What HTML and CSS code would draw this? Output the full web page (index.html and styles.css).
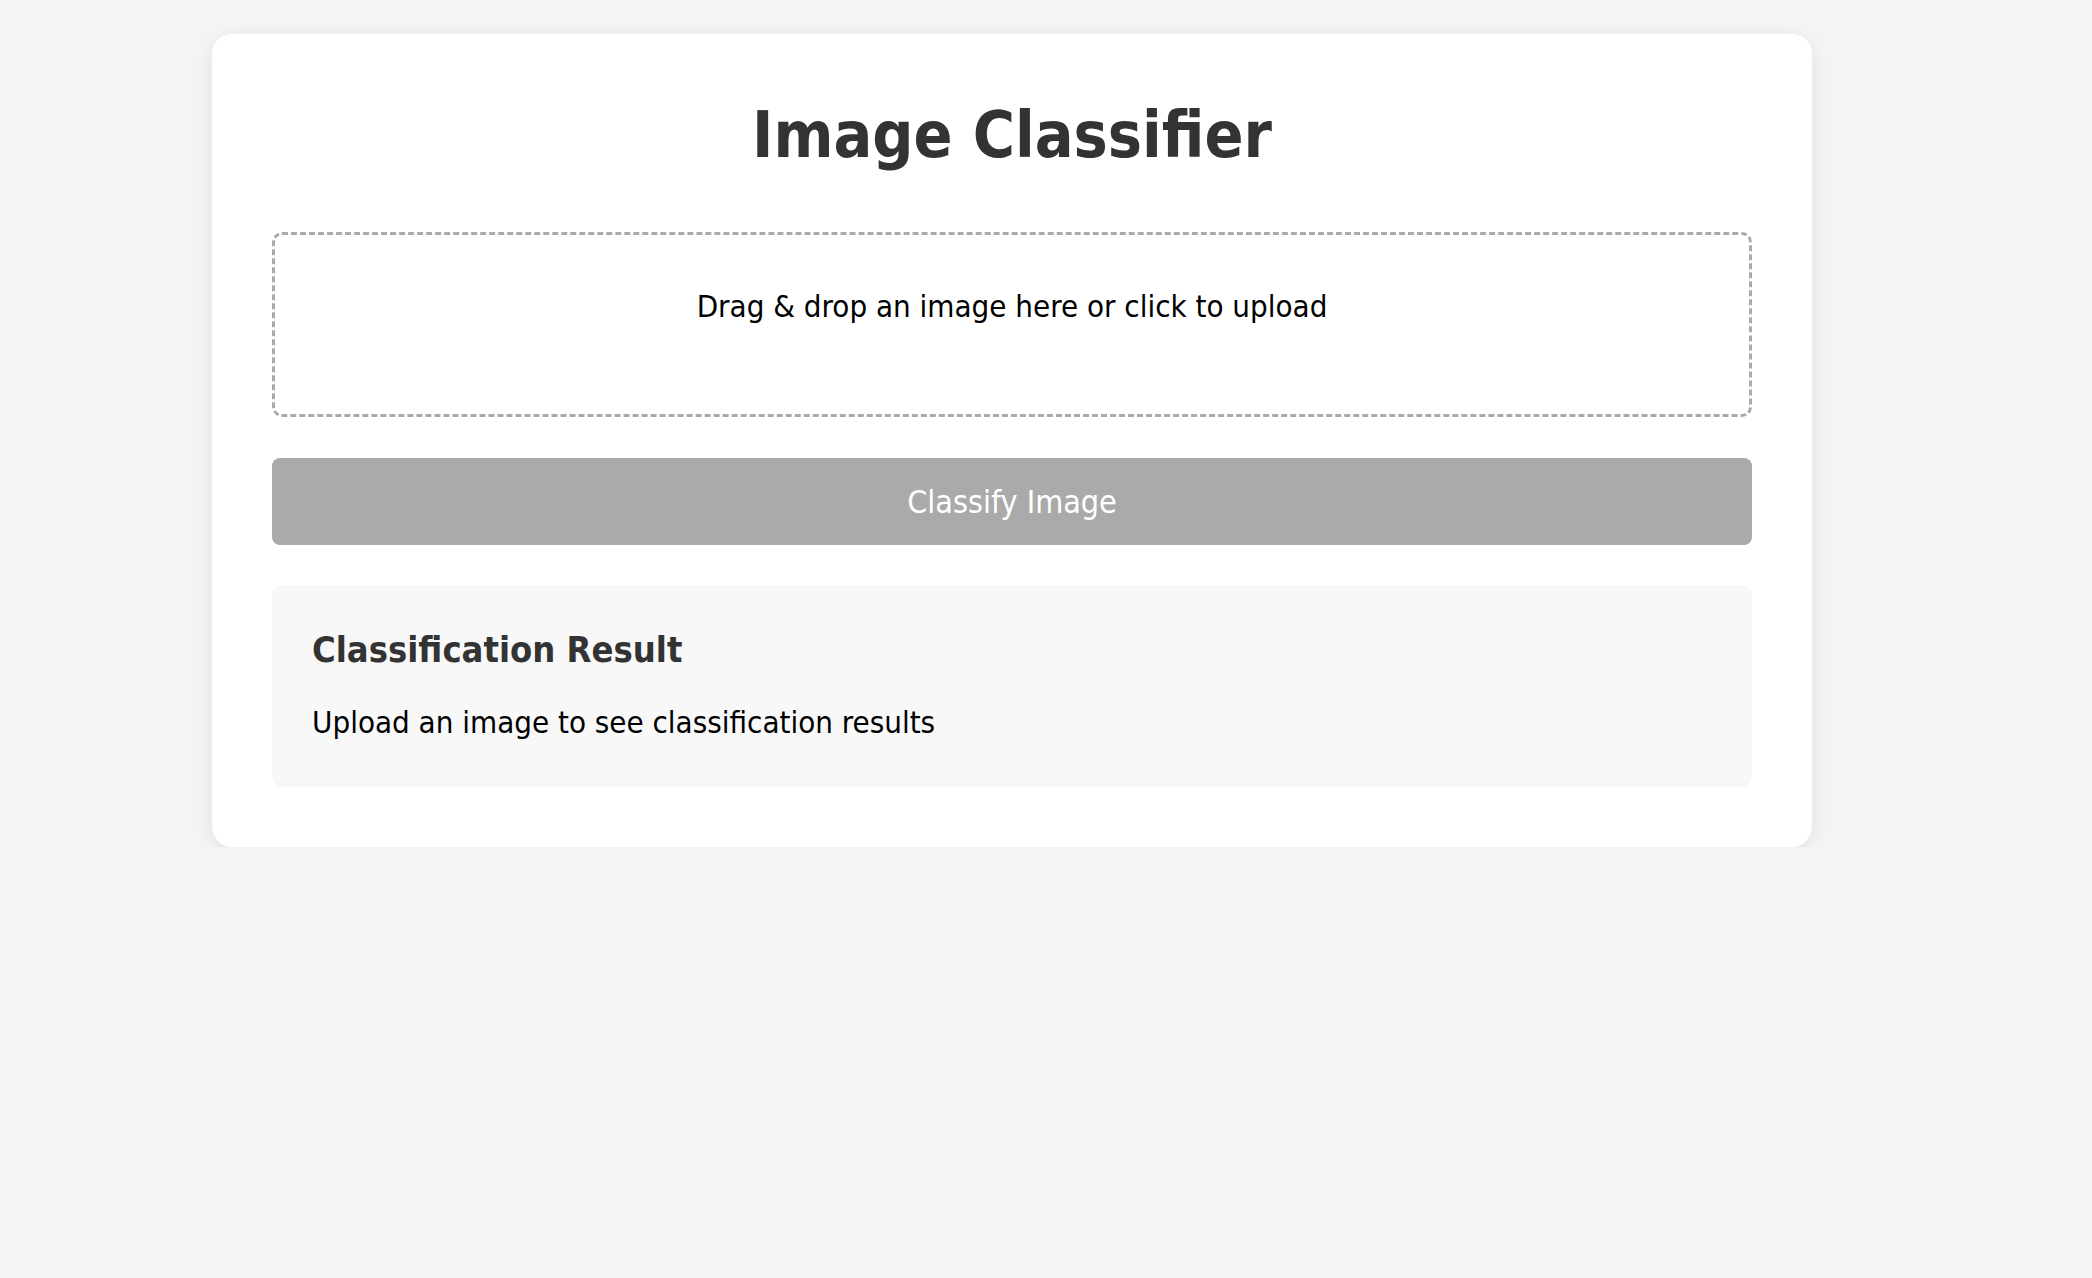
FILE: index.html
```html
<!DOCTYPE html>
<html lang="en">
<head>
<meta charset="utf-8">
<title>Image Classifier</title>
<link rel="stylesheet" href="styles.css">
</head>
<body>
<main class="card">
  <h1 class="title">Image Classifier</h1>
  <div class="dropzone">
    <p class="dropzone-text">Drag &amp; drop an image here or click to upload</p>
  </div>
  <button class="classify-btn" type="button" disabled>Classify Image</button>
  <section class="result">
    <h2 class="result-title">Classification Result</h2>
    <p class="result-text">Upload an image to see classification results</p>
  </section>
</main>
</body>
</html>
```

FILE: styles.css
```css
html, body {
  margin: 0;
  padding: 0;
}

body {
  background: #f4f4f4;
  font-family: "DejaVu Sans Condensed", Tahoma, "DejaVu Sans", sans-serif;
  color: #000;
  padding-top: 34px;
}

.card {
  box-sizing: border-box;
  width: 1600px;
  margin-left: 212px;
  padding: 60px;
  background: #fff;
  border-radius: 20px;
  box-shadow: 0 4px 20px rgba(0, 0, 0, 0.08);
}

.title {
  margin: 3px 0 58px;
  font-size: 64px;
  line-height: 77px;
  font-weight: bold;
  color: #333;
  text-align: center;
}

.dropzone {
  box-sizing: border-box;
  height: 185px;
  padding-top: 52px;
  border: 3px dashed #aaa;
  border-radius: 10px;
  text-align: center;
}

.dropzone-text {
  margin: 0;
  font-size: 31px;
  line-height: 38px;
}

.classify-btn {
  display: block;
  width: 100%;
  height: 87px;
  margin-top: 41px;
  border: none;
  border-radius: 8px;
  background: #aaa;
  color: #fff;
  font-family: inherit;
  font-size: 32px;
  padding: 0;
}

.result {
  margin-top: 40px;
  padding: 43px 40px 46px;
  background: #f8f8f8;
  border-radius: 10px;
}

.result-title {
  margin: 0 0 31px;
  font-size: 36px;
  line-height: 44px;
  font-weight: bold;
  color: #333;
}

.result-text {
  margin: 0;
  font-size: 31px;
  line-height: 38px;
}
```
